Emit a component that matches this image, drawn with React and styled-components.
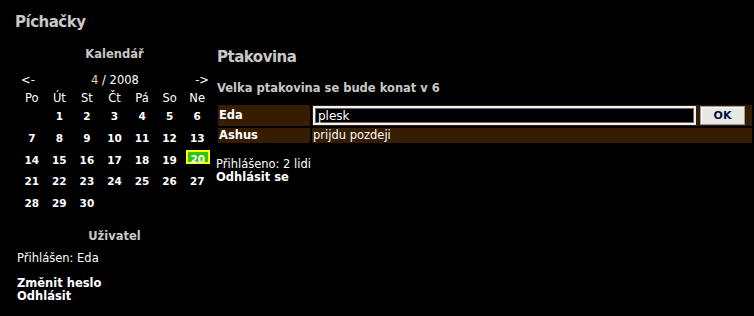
import React from "react";
import styled, { createGlobalStyle } from "styled-components";

const GlobalStyle = createGlobalStyle`
  html, body { margin: 0; padding: 0; background: #000; }
  body {
    font-family: "DejaVu Sans", Verdana, sans-serif;
    font-size: 11.5px;
    color: #fff;
  }
`;

const Page = styled.div`
  padding: 13px 0 0 15px;
  width: 739px;
  height: 303px;
  overflow: hidden;
`;

const SiteTitle = styled.h1`
  margin: 0;
  font-size: 15px;
  letter-spacing: -0.5px;
  line-height: 18px;
  font-weight: bold;
  color: #c8c8c8;
`;

const Columns = styled.div`
  display: flex;
  gap: 2px;
`;

const Sidebar = styled.div`
  width: 199px;
  flex: none;
  display: flex;
  flex-direction: column;
`;

const BoxTitle = styled.div`
  margin-top: ${(p) => p.$mt}px;
  text-align: center;
  font-weight: bold;
  color: #c8c8c8;
  line-height: 14px;
`;

const Calendar = styled.div`
  width: 193px;
  margin: 10px auto 0;
  display: grid;
  grid-template-columns: repeat(7, 1fr);
`;

const NavRow = styled.div`
  grid-column: 1 / -1;
  height: 18px;
  display: flex;
  align-items: center;
  justify-content: space-between;
  padding: 0 2px 0 3px;
`;

const NavLink = styled.span`
  color: #fff;
`;

const Month = styled.span`
  color: ${(p) => p.$hl ? "#ffcc88" : "#fff"};
`;

const DayName = styled.div`
  height: 17px;
  display: flex;
  align-items: center;
  justify-content: center;
`;

const DayCell = styled.div`
  height: 21.75px;
  display: flex;
  justify-content: center;
  align-items: flex-start;
  padding-top: ${(p) => (p.$today ? 0.5 : 4)}px;
  box-sizing: border-box;
  font-weight: bold;
  font-size: 10.5px;
  line-height: 12px;
`;

const Today = styled.span`
  display: block;
  box-sizing: border-box;
  height: 14px;
  width: 24px;
  margin-left: 1px;
  text-align: center;
  padding-top: 1px;
  background: #33c400;
  border: 2px solid #ffff00;
  line-height: 12px;
`;

const Line = styled.div`
  margin-top: ${(p) => p.$mt || 0}px;
  padding-left: ${(p) => p.$pl || 0}px;
  line-height: 13px;
  font-weight: ${(p) => (p.$bold ? "bold" : "normal")};
`;

const Main = styled.div`
  flex: 1;
  display: flex;
  flex-direction: column;
`;

const EventTitle = styled.h2`
  margin: 17px 0 0 1px;
  font-size: 15px;
  letter-spacing: -0.5px;
  line-height: 18px;
  color: #c8c8c8;
`;

const EventDesc = styled.div`
  margin: 15px 0 0 1px;
  font-weight: bold;
  line-height: 14px;
  color: #c8c8c8;
`;

const Signups = styled.div`
  margin-top: 8px;
  display: grid;
  grid-template-columns: 92px 1fr;
  gap: 2px;
  padding: 2px;
`;

const NameCell = styled.div`
  background: #361c00;
  font-weight: bold;
  padding: 0 1px;
  line-height: 13px;
  display: flex;
  align-items: center;
  height: ${(p) => p.$h}px;
`;

const NoteCell = styled.div`
  background: #361c00;
  padding: 0 1px;
  line-height: 13px;
  display: flex;
  align-items: center;
  gap: 4px;
  height: ${(p) => p.$h}px;
`;

const NoteInput = styled.input`
  width: 383px;
  height: 19px;
  box-sizing: border-box;
  margin: 0;
  padding: 0 3px;
  background: #000;
  color: #fff;
  font-family: "DejaVu Sans", Verdana, sans-serif;
  font-size: 12px;
  border: 2px solid #f2f2f2;
  box-shadow: inset 0 0 0 1px #6a6a6a;
  outline: none;
`;

const OkButton = styled.button`
  width: 45px;
  height: 19px;
  margin: 0;
  padding: 0;
  box-sizing: border-box;
  background: #e8e8e4;
  border: 1px solid #9a9a9a;
  box-shadow: inset 1px 1px 0 #fff;
  color: #001040;
  font-family: "DejaVu Sans", Verdana, sans-serif;
  font-weight: bold;
  font-size: 11px;
`;

const weeks = [
  [null, 1, 2, 3, 4, 5, 6],
  [7, 8, 9, 10, 11, 12, 13],
  [14, 15, 16, 17, 18, 19, 20],
  [21, 22, 23, 24, 25, 26, 27],
  [28, 29, 30, null, null, null, null],
];

const dayNames = ["Po", "Út", "St", "Čt", "Pá", "So", "Ne"];

export default function App() {
  return (
    <>
      <GlobalStyle />
      <Page>
        <SiteTitle>Píchačky</SiteTitle>
        <Columns>
          <Sidebar>
            <BoxTitle $mt={16}>Kalendář</BoxTitle>
            <Calendar>
              <NavRow>
                <NavLink>&lt;-</NavLink>
                <span>
                  <Month $hl>4</Month> / 2008
                </span>
                <NavLink>-&gt;</NavLink>
              </NavRow>
              {dayNames.map((d) => (
                <DayName key={d}>{d}</DayName>
              ))}
              {weeks.flat().map((d, i) =>
                d === 20 ? (
                  <DayCell key={i} $today>
                    <Today>{d}</Today>
                  </DayCell>
                ) : (
                  <DayCell key={i}>{d}</DayCell>
                )
              )}
            </Calendar>
            <BoxTitle $mt={14}>Uživatel</BoxTitle>
            <Line $mt={9} $pl={2}>Přihlášen: Eda</Line>
            <Line $mt={12} $pl={2} $bold>Změnit heslo</Line>
            <Line $pl={2} $bold>Odhlásit</Line>
          </Sidebar>
          <Main>
            <EventTitle>Ptakovina</EventTitle>
            <EventDesc>Velka ptakovina se bude konat v 6</EventDesc>
            <Signups>
              <NameCell $h={21}>Eda</NameCell>
              <NoteCell $h={21}>
                <NoteInput defaultValue="plesk" />
                <OkButton>OK</OkButton>
              </NoteCell>
              <NameCell $h={15}>Ashus</NameCell>
              <NoteCell $h={15}>prijdu pozdeji</NoteCell>
            </Signups>
            <Line $mt={13}>Přihlášeno: 2 lidi</Line>
            <Line $bold>Odhlásit se</Line>
          </Main>
        </Columns>
      </Page>
    </>
  );
}
